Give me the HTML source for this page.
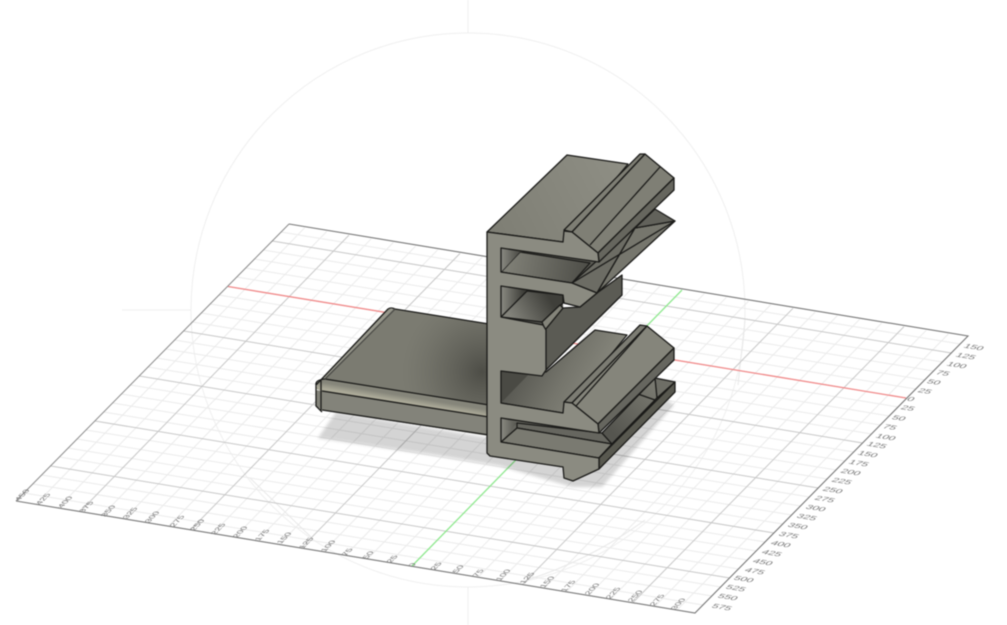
<!DOCTYPE html>
<html>
<head>
<meta charset="utf-8">
<style>
html,body{margin:0;padding:0;background:#fff;width:1007px;height:625px;overflow:hidden}
svg{display:block;filter:blur(.5px)}
.lb text{font:10px "Liberation Sans",sans-serif;fill:#777;text-anchor:middle}
.m polygon,.m path{stroke:#1b1b19;stroke-width:1.3;stroke-linejoin:round}
.m .n{stroke:none}
.m .l{fill:none}
</style>
</head>
<body>
<svg width="1007" height="625" viewBox="0 0 1007 625" xmlns="http://www.w3.org/2000/svg">
<defs>
<filter id="sb" x="-10%" y="-10%" width="120%" height="120%"><feGaussianBlur stdDeviation="1.6"/></filter>
<radialGradient id="ps" gradientUnits="userSpaceOnUse" cx="482" cy="372" r="80">
<stop offset="0" stop-color="#45453f" stop-opacity=".85"/><stop offset=".55" stop-color="#55554e" stop-opacity=".4"/><stop offset="1" stop-color="#66665e" stop-opacity="0"/>
</radialGradient>
<linearGradient id="band" gradientUnits="userSpaceOnUse" x1="322" y1="382" x2="320" y2="394">
<stop offset="0" stop-color="#85857a"/><stop offset=".55" stop-color="#aeac9a"/><stop offset="1" stop-color="#8c8b7f"/>
</linearGradient>
<linearGradient id="fl" gradientUnits="userSpaceOnUse" x1="510" y1="375" x2="580" y2="415">
<stop offset="0" stop-color="#55554f"/><stop offset=".6" stop-color="#75756c"/><stop offset="1" stop-color="#85857b"/>
</linearGradient>
<linearGradient id="fl2" gradientUnits="userSpaceOnUse" x1="510" y1="262" x2="585" y2="275">
<stop offset="0" stop-color="#7e7e75"/><stop offset="1" stop-color="#4f4f49"/>
</linearGradient>
<linearGradient id="fl3" gradientUnits="userSpaceOnUse" x1="512" y1="318" x2="548" y2="296">
<stop offset="0" stop-color="#82827a"/><stop offset="1" stop-color="#3f3f3a"/>
</linearGradient>
<linearGradient id="wl" gradientUnits="userSpaceOnUse" x1="501" y1="0" x2="524" y2="0">
<stop offset="0" stop-color="#8a8a82"/><stop offset="1" stop-color="#3c3c37"/>
</linearGradient>
<linearGradient id="top" gradientUnits="userSpaceOnUse" x1="490" y1="235" x2="620" y2="165">
<stop offset="0" stop-color="#7e7e74"/><stop offset="1" stop-color="#8e8e84"/>
</linearGradient>
<linearGradient id="bev" gradientUnits="userSpaceOnUse" x1="610" y1="430" x2="655" y2="385">
<stop offset="0" stop-color="#55554f"/><stop offset="1" stop-color="#7a7a71"/>
</linearGradient>
</defs>

<!-- view circle -->
<g fill="none" stroke="#efefef" stroke-width="1">
<circle cx="468" cy="310" r="277"/>
<path d="M468 0V33M468 587V625M122 310H191"/>
</g>

<!-- minor grid -->
<path fill="none" stroke="#ebebeb" stroke-width="1" d="
M36.3 503.9L304.6 227.8M58.4 507.6L326.8 231.4M102.6 514.9L371.2 238.8M124.7 518.6L393.4 242.4M146.8 522.2L415.6 246.1M168.9 525.9L437.8 249.7
M213.1 533.2L482.2 257.1M235.2 536.8L504.4 260.7M257.3 540.5L526.6 264.4M279.4 544.1L548.8 268
M323.6 551.4L593.2 275.4M345.7 555.1L615.4 279M367.8 558.7L637.6 282.7M389.9 562.4L659.8 286.3
M434.1 569.7L704.2 293.7M456.2 573.3L726.4 297.3M478.3 577L748.6 301M500.4 580.6L770.8 304.6
M544.6 587.9L815.2 312M566.7 591.6L837.4 315.6M588.8 595.2L859.6 319.3M610.9 598.9L881.8 322.9
M655.1 606.2L926.2 330.3M677.2 609.8L948.4 333.9
M960.1 344L281.1 232M942.4 362L263.4 250M933.5 371L254.5 259M924.7 380L245.7 268M915.8 389L236.8 277
M898 407L219 295M889.2 416L210.2 304M880.3 425L201.3 313M871.5 434L192.5 322
M853.7 452L174.7 340M844.9 461L165.9 349M836 470L157 358M827.1 479L148.1 367
M809.4 497L130.4 385M800.6 506L121.6 394M791.7 515L112.7 403M782.8 524L103.8 412
M765.1 542L86.1 430M756.2 551L77.2 439M747.4 560L68.4 448M738.5 569L59.5 457
M720.8 587L41.8 475M711.9 596L32.9 484M703.1 605L24.1 493"/>
<!-- faint ground arcs -->
<path fill="none" stroke="#e8e8e8" stroke-width="1" d="M250 478L312 538M527 580Q590 560 645 520M745 320L738 385"/>
<!-- major grid -->
<path fill="none" stroke="#c8c8c8" stroke-width="1" d="
M80.5 511.3L349 235.1M191 529.5L460 253.4M301.5 547.8L571 271.7M522.5 584.3L793 308.3M633 602.5L904 326.6
M951.3 353L272.3 241M862.6 443L183.6 331M818.3 488L139.3 376M774 533L95 421M729.7 578L50.7 466"/>
<!-- axes -->
<path d="M228 286.5L906 398" stroke="#f08a8a" stroke-width="1.3" fill="none"/>
<path d="M412 566L682 290" stroke="#8fe88f" stroke-width="1.3" fill="none"/>
<!-- border -->
<path d="M16 501L289 224" stroke="#8a8a8a" stroke-width="1" fill="none"/>
<path d="M289 224L968 336L695 613L16 501" stroke="#777" stroke-width="1.1" fill="none"/>

<!-- labels bottom -->
<g class="lb">
<text transform="matrix(.66,-.66,.74,.13,22,495)" y="3.5">450</text>
<text transform="matrix(.66,-.66,.74,.13,43,499)" y="3.5">425</text>
<text transform="matrix(.66,-.66,.74,.13,65,502)" y="3.5">400</text>
<text transform="matrix(.66,-.66,.74,.13,86,507)" y="3.5">375</text>
<text transform="matrix(.66,-.66,.74,.13,108,511)" y="3.5">350</text>
<text transform="matrix(.66,-.66,.74,.13,130,513)" y="3.5">325</text>
<text transform="matrix(.66,-.66,.74,.13,152,517)" y="3.5">300</text>
<text transform="matrix(.66,-.66,.74,.13,177,521)" y="3.5">275</text>
<text transform="matrix(.66,-.66,.74,.13,197,525)" y="3.5">250</text>
<text transform="matrix(.66,-.66,.74,.13,218,529)" y="3.5">225</text>
<text transform="matrix(.66,-.66,.74,.13,240,532)" y="3.5">200</text>
<text transform="matrix(.66,-.66,.74,.13,262,535)" y="3.5">175</text>
<text transform="matrix(.66,-.66,.74,.13,284,538)" y="3.5">150</text>
<text transform="matrix(.66,-.66,.74,.13,306,543)" y="3.5">125</text>
<text transform="matrix(.66,-.66,.74,.13,328,546)" y="3.5">100</text>
<text transform="matrix(.66,-.66,.74,.13,347,552)" y="3.5">75</text>
<text transform="matrix(.66,-.66,.74,.13,368,555)" y="3.5">50</text>
<text transform="matrix(.66,-.66,.74,.13,392,559)" y="3.5">25</text>
<text transform="matrix(.66,-.66,.74,.13,412,565)" y="3.5">0</text>
<text transform="matrix(.66,-.66,.74,.13,436,566)" y="3.5">25</text>
<text transform="matrix(.66,-.66,.74,.13,458,569)" y="3.5">50</text>
<text transform="matrix(.66,-.66,.74,.13,478,573)" y="3.5">75</text>
<text transform="matrix(.66,-.66,.74,.13,503,575)" y="3.5">100</text>
<text transform="matrix(.66,-.66,.74,.13,527,578)" y="3.5">125</text>
<text transform="matrix(.66,-.66,.74,.13,547,582)" y="3.5">150</text>
<text transform="matrix(.66,-.66,.74,.13,568,586)" y="3.5">175</text>
<text transform="matrix(.66,-.66,.74,.13,592,589)" y="3.5">200</text>
<text transform="matrix(.66,-.66,.74,.13,613,593)" y="3.5">225</text>
<text transform="matrix(.66,-.66,.74,.13,635,596)" y="3.5">250</text>
<text transform="matrix(.66,-.66,.74,.13,657,600)" y="3.5">275</text>
<text transform="matrix(.66,-.66,.74,.13,678,604)" y="3.5">300</text>
</g>
<!-- labels right -->
<g class="lb">
<text transform="matrix(1.12,.19,-.55,.55,974,347)" y="3.5">150</text>
<text transform="matrix(1.12,.19,-.55,.55,966,356)" y="3.5">125</text>
<text transform="matrix(1.12,.19,-.55,.55,957,365)" y="3.5">100</text>
<text transform="matrix(1.12,.19,-.55,.55,943,373)" y="3.5">75</text>
<text transform="matrix(1.12,.19,-.55,.55,934,382)" y="3.5">50</text>
<text transform="matrix(1.12,.19,-.55,.55,925,391)" y="3.5">25</text>
<text transform="matrix(1.12,.19,-.55,.55,911,399)" y="3.5">0</text>
<text transform="matrix(1.12,.19,-.55,.55,908,408)" y="3.5">25</text>
<text transform="matrix(1.12,.19,-.55,.55,899,418)" y="3.5">50</text>
<text transform="matrix(1.12,.19,-.55,.55,890,427)" y="3.5">75</text>
<text transform="matrix(1.12,.19,-.55,.55,886,437)" y="3.5">100</text>
<text transform="matrix(1.12,.19,-.55,.55,877,445)" y="3.5">125</text>
<text transform="matrix(1.12,.19,-.55,.55,868,454)" y="3.5">150</text>
<text transform="matrix(1.12,.19,-.55,.55,859,463)" y="3.5">175</text>
<text transform="matrix(1.12,.19,-.55,.55,851,472)" y="3.5">200</text>
<text transform="matrix(1.12,.19,-.55,.55,842,481)" y="3.5">225</text>
<text transform="matrix(1.12,.19,-.55,.55,833,490)" y="3.5">250</text>
<text transform="matrix(1.12,.19,-.55,.55,825,499)" y="3.5">275</text>
<text transform="matrix(1.12,.19,-.55,.55,816,508)" y="3.5">300</text>
<text transform="matrix(1.12,.19,-.55,.55,807,517)" y="3.5">325</text>
<text transform="matrix(1.12,.19,-.55,.55,798,526)" y="3.5">350</text>
<text transform="matrix(1.12,.19,-.55,.55,789,535)" y="3.5">375</text>
<text transform="matrix(1.12,.19,-.55,.55,781,544)" y="3.5">400</text>
<text transform="matrix(1.12,.19,-.55,.55,772,553)" y="3.5">425</text>
<text transform="matrix(1.12,.19,-.55,.55,763,562)" y="3.5">450</text>
<text transform="matrix(1.12,.19,-.55,.55,755,571)" y="3.5">475</text>
<text transform="matrix(1.12,.19,-.55,.55,744,579)" y="3.5">500</text>
<text transform="matrix(1.12,.19,-.55,.55,736,588)" y="3.5">525</text>
<text transform="matrix(1.12,.19,-.55,.55,728,597)" y="3.5">550</text>
<text transform="matrix(1.12,.19,-.55,.55,722,607)" y="3.5">575</text>
</g>

<!-- ground shadow -->
<polygon fill="#000" fill-opacity=".17" filter="url(#sb)" points="318,438 336,412 490,438 600,460 640,395 656,392 674,405 602,487 572,487 500,466 440,456"/>

<g class="m">
<!-- base plate -->
<polygon class="n" fill="#7b7b71" points="316,385 325,379 395,309 489,324 489,406"/>
<polygon class="n" fill="url(#ps)" points="325,379 395,309 489,324 489,406"/>
<polygon class="n" fill="#96968a" points="316,385 388,309 395,309 325,379"/>
<polygon class="n" fill="url(#band)" points="318,382 325,379 489,405 489,417 322,391 316,389"/>
<polygon class="n" fill="#83837a" points="316,390 322,391 489,417 489,436 322,410 316,406"/>
<path class="l" d="M316 385L388 309Q391 307 395 309L489 324"/>
<path class="l" d="M325 379L489 405M322 391L489 417M322 410L489 435"/>
<path class="l" d="M321 380V411M316 385Q315 380 325 379M316 385V406L322 412"/>
<path class="l" style="stroke:#4a4a46" d="M325 379L395 309"/>

<!-- slot 3 and bottom arm -->
<polygon class="n" fill="#66665f" points="501,418 600,433 612,444 599,458 501,442"/>
<polygon class="n" fill="url(#wl)" points="501,418 501,442 517,423"/>
<polygon fill="#66665f" points="517,423 602,433 612,444 517,428"/>
<polygon fill="#7a7a71" points="501,442 517,428 612,444 599,458"/>
<polygon class="n" fill="#6e6e66" points="655,378 675,382 657,398"/>
<polygon fill="url(#bev)" points="602,433 612,444 657,398 655,378"/>
<polygon fill="#74746b" points="599,458 612,444 657,398 675,382"/>
<polygon fill="#58584f" points="599,458 675,382 675,392 599,469"/>
<path class="l" d="M635 393L655 400"/>
<path class="l" d="M655 378L675 382"/>

<!-- lower arm floor and ridge -->
<polygon fill="url(#fl)" points="501,403 563,413 627,335 595,330 546,372 501,371"/>
<polygon class="n" fill="#4a4a44" points="501,371 528,375 501,403"/>
<polygon fill="#7c7c73" points="564,402 572,403 647,326 640,325"/>
<polygon fill="#85857b" points="572,403 598,424 674,348 647,326"/>
<polygon fill="#66665f" points="598,424 599,433 674,360 674,348"/>
<path class="l" d="M576 406L647 326"/>

<!-- mid block -->
<polygon fill="#5b5b54" points="545,330 563,308 580,307 597,293 622,275 622,295 546,370"/>
<!-- slot 2 -->
<polygon class="n" fill="#55554f" points="501,286 563,295 563,308 545,330 501,317"/>
<polygon class="n" fill="url(#wl)" points="501,286 563,294 527,291 501,317"/>
<polygon fill="url(#fl3)" points="501,317 527,291 563,295 563,303 545,320 542,322"/>
<polygon fill="#84847a" points="542,322 545,330 563,308 560,305"/>
<polygon fill="#6a6a62" points="564,303 580,307 597,293 563,296"/>

<!-- slot 1 -->
<polygon class="n" fill="#5c5c55" points="501,248 600,262 572,283 501,272"/>
<polygon class="n" fill="#6a6a62" points="572,283 600,258 655,209 675,221 597,293"/>
<polygon fill="url(#fl2)" points="501,272 520,252 590,263 572,283"/>
<polygon class="n" fill="url(#wl)" points="501,248 528,252 520,252 501,272"/>
<!-- mid hook bevel -->
<polygon fill="#6c6c64" points="572,283 597,293 635,228 600,258"/>
<polygon fill="#76766d" points="597,293 635,228 675,221"/>
<polygon fill="#62625b" points="635,228 655,209 675,221"/>
<path class="l" d="M572 283L675 221"/>

<!-- top arm -->
<polygon fill="url(#top)" points="487,232 567,155 628,164 563,242"/>
<polygon fill="#7e7e74" points="564,230 572,232 645,154 640,154"/>
<polygon fill="#7f7f75" points="572,232 598,253 674,178 645,154"/>
<polygon fill="#66665e" points="598,253 599,262 674,190 674,178"/>
<path class="l" d="M590 245L660 167"/>

<!-- front profile -->
<polygon fill="#8b8b81" points="487,232 563,242 564,231 572,232 598,253 599,262 501,248 501,272 572,283 597,293 580,307 564,303 563,295 501,286 501,317 543,325 546,330 546,370 542,376 501,371 501,403 563,413 564,402 572,403 598,424 599,433 501,418 501,442 599,458 599,469 573,481 564,478 563,467 490,456 487,453"/>
</g>
</svg>
</body>
</html>
